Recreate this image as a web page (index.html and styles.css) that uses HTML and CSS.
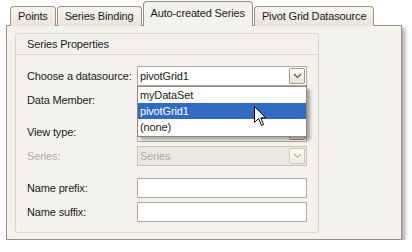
FILE: index.html
```html
<!DOCTYPE html>
<html>
<head>
<meta charset="utf-8">
<link rel="stylesheet" href="styles.css">
</head>
<body>
<div class="window">
  <div class="tabs">
    <div class="tab">Points</div>
    <div class="tab">Series Binding</div>
    <div class="tab active">Auto-created Series</div>
    <div class="tab">Pivot Grid Datasource</div>
  </div>
  <div class="panel">
    <div class="group">
      <div class="group-head">Series Properties</div>
      <div class="group-body">
        <div class="row">
          <span class="label">Choose a datasource:</span>
          <div class="combo"><span class="value">pivotGrid1</span><span class="btn"><svg width="9" height="6" viewBox="0 0 9 6"><path d="M1 1 L4.5 4.5 L8 1" fill="none" stroke="#5f5346" stroke-width="1.2"/></svg></span></div>
          <div class="dropdown">
            <div class="item">myDataSet</div>
            <div class="item sel">pivotGrid1</div>
            <div class="item">(none)</div>
            <svg class="cursor" width="13" height="21" viewBox="0 0 13 21"><path d="M0.5 0.5 L0.5 16.5 L4.5 12.5 L7.5 19.5 L9.5 18.5 L6.8 11.8 L11.5 11.8 Z" fill="#fff" stroke="#000" stroke-width="1" stroke-linejoin="miter"/></svg>
          </div>
        </div>
        <div class="row">
          <span class="label">Data Member:</span>
          <div class="combo"><span class="value"></span><span class="btn"></span></div>
        </div>
        <div class="row gap">
          <span class="label">View type:</span>
          <div class="combo"><span class="value"></span><span class="btn"></span></div>
        </div>
        <div class="row">
          <span class="label disabled">Series:</span>
          <div class="combo dis"><span class="value">Series</span><span class="btn"><svg width="9" height="6" viewBox="0 0 9 6"><path d="M1 1 L4.5 4.5 L8 1" fill="none" stroke="#b9b0a5" stroke-width="1.2"/></svg></span></div>
        </div>
        <div class="row gap">
          <span class="label">Name prefix:</span>
          <div class="edit"></div>
        </div>
        <div class="row">
          <span class="label">Name suffix:</span>
          <div class="edit"></div>
        </div>
      </div>
    </div>
  </div>
</div>
</body>
</html>
```

FILE: styles.css
```css
html, body {
  margin: 0;
  padding: 0;
  background: #ffffff;
}
body {
  font-family: "Liberation Sans", Arial, sans-serif;
  font-size: 11px;
  letter-spacing: -0.15px;
  color: #1b1b1b;
}
.window {
  padding: 2px 0 0 6px;
  width: 396px;
}
.tabs {
  display: flex;
  align-items: flex-end;
  height: 24px;
  padding-left: 4px;
  position: relative;
  z-index: 2;
  margin-bottom: -1px;
}
.tab {
  height: 20px;
  box-sizing: border-box;
  border: 1px solid #9d9080;
  border-bottom: none;
  border-radius: 4px 4px 0 0;
  background: linear-gradient(#f7f5f0, #e9e3d8);
  padding: 0 7px;
  line-height: 19px;
  margin-right: 1px;
  white-space: nowrap;
}
.tab.active {
  height: 25px;
  background: #f4f2ed;
  padding: 0 7px;
  line-height: 22px;
  margin: 0 1px 0 0;
}
.panel {
  height: 215px;
  box-sizing: border-box;
  border: 1px solid #9d9080;
  background: #f4f2ed;
  box-shadow: 3px 3px 4px rgba(0, 0, 0, 0.35);
  padding: 7px 0 0 8px;
}
.group {
  width: 304px;
  height: 200px;
  box-sizing: border-box;
  border: 1px solid #dcd6cb;
  border-radius: 3px;
}
.group-head {
  height: 20px;
  line-height: 20px;
  padding-left: 11px;
  border-bottom: 1px solid #dcd6cb;
}
.group-body {
  padding: 11px 11px 0 11px;
  display: flex;
  flex-direction: column;
  gap: 4px;
}
.row {
  display: flex;
  align-items: center;
  height: 20px;
  position: relative;
}
.row.gap {
  margin-top: 8px;
}
.label {
  width: 110px;
  flex: none;
}
.label.disabled {
  color: #b2aba2;
}
.combo, .edit {
  width: 170px;
  height: 20px;
  box-sizing: border-box;
  border: 1px solid #b7ab9e;
  background: #ffffff;
  display: flex;
  align-items: center;
}
.combo .value {
  flex: 1;
  padding-left: 2px;
}
.combo .btn {
  width: 16px;
  height: 16px;
  box-sizing: border-box;
  margin-right: 1px;
  border: 1px solid #a59684;
  border-radius: 2px;
  background: linear-gradient(#fcfbf8, #ebe6dc);
  display: flex;
  align-items: center;
  justify-content: center;
}
.combo.dis {
  background: #ece8df;
  border-color: #cbc3b8;
  color: #b2aba2;
}
.combo.dis .btn {
  border-color: #cfc7bc;
  background: linear-gradient(#fbfaf7, #f1eee8);
}
.dropdown {
  position: absolute;
  left: 110px;
  top: 20px;
  width: 170px;
  height: 51px;
  box-sizing: border-box;
  border: 1px solid #8e8880;
  background: #ffffff;
  box-shadow: 3px 3px 3px rgba(0, 0, 0, 0.35);
  z-index: 5;
}
.item {
  height: 16px;
  line-height: 16px;
  padding-left: 2px;
}
.item.sel {
  background: #316ac5;
  color: #ffffff;
}
.cursor {
  position: absolute;
  left: 116px;
  top: 19px;
}
```
